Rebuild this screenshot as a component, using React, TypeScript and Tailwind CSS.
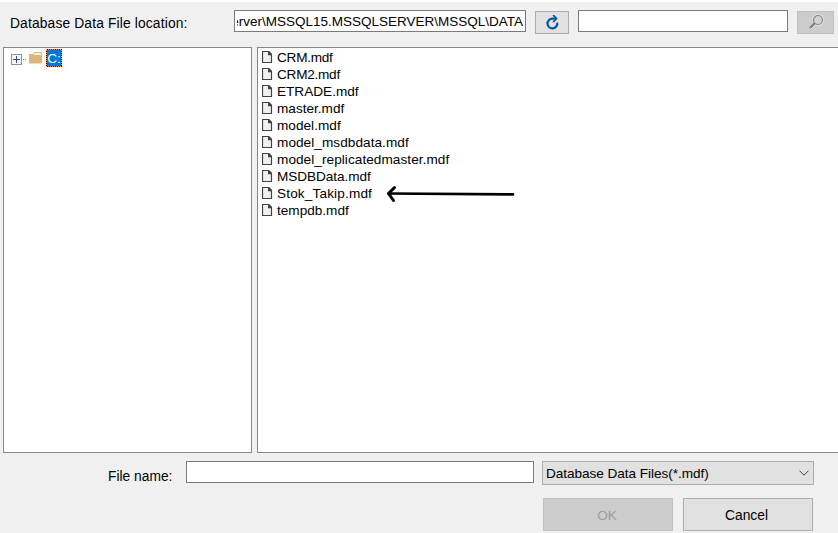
const files = [
  { name: 'CRM.mdf', tracking: 'tracking-[-0.25px]' },
  { name: 'CRM2.mdf', tracking: 'tracking-[-0.25px]' },
  { name: 'ETRADE.mdf', tracking: 'tracking-[0px]' },
  { name: 'master.mdf', tracking: 'tracking-[0px]' },
  { name: 'model.mdf', tracking: 'tracking-[0.03px]' },
  { name: 'model_msdbdata.mdf', tracking: 'tracking-[0.06px]' },
  { name: 'model_replicatedmaster.mdf', tracking: 'tracking-[0.06px]' },
  { name: 'MSDBData.mdf', tracking: 'tracking-[-0.05px]' },
  { name: 'Stok_Takip.mdf', tracking: 'tracking-[0.15px]' },
  { name: 'tempdb.mdf', tracking: 'tracking-[0px]' },
];

function FileIcon() {
  return (
    <svg className="-mt-[2px] block h-3 w-[11px] shrink-0" viewBox="0 0 11 12" fill="none">
      <path d="M.5.5H6.5L9.5 3.5V11.5H.5Z" fill="#f0eff1" stroke="#424242" strokeWidth="1.2" />
      <path d="M6 0H7l3 3v1.2H6Z" fill="#424242" />
    </svg>
  );
}

export default function App() {
  return (
    <div className="flex h-[533px] w-[838px] flex-col overflow-hidden border-t-2 border-white bg-[#f0f0f0] font-['Liberation_Sans',Arial,sans-serif] text-[13.6px] leading-[17px] text-black">
      <div className="flex h-[45px] shrink-0 items-start pt-2">
        <div className="w-[234px] shrink-0 pt-[5px] pl-[10px] text-[13.8px] whitespace-nowrap tracking-[0.15px]">Database Data File location:</div>
        <div className="flex h-[22px] w-[292px] shrink-0 items-center border border-[#7a7a7a] bg-white px-[2px]">
          <div className="flex w-full justify-end overflow-hidden whitespace-nowrap">
            <span className="shrink-0 text-[13.5px]">erver\MSSQL15.MSSQLSERVER\MSSQL\DATA</span>
          </div>
        </div>
        <button aria-label="Refresh" className="mt-px ml-[9px] flex h-[23px] w-[34px] shrink-0 items-center justify-center border border-[#adadad] bg-[#e1e1e1]">
          <svg className="h-[15px] w-[13px]" viewBox="0 0 13 15" fill="none">
            <path d="M8 3.6H6.4A4.9 4.9 0 1 0 11.2 7.6" stroke="#0055a0" strokeWidth="2.2" />
            <path d="M6.3 0H8.3l3.4 3.6-3.4 3.6H6.3l1.9-2.6v-2Z" fill="#0055a0" />
          </svg>
        </button>
        <input aria-label="Search" className="ml-[9px] h-[22px] w-[210px] shrink-0 border border-[#7a7a7a] bg-white outline-none" />
        <button aria-label="Search files" className="mt-px ml-[9px] flex h-[23px] w-[37px] shrink-0 justify-center border border-[#bfbfbf] bg-[#cccccc] pt-[2px]">
          <svg className="h-4 w-4" viewBox="0 0 16 16" fill="none">
            <circle cx="10" cy="6" r="4.8" stroke="#e2e2e2" strokeWidth="2.6" />
            <path d="M2 14 7 9.2" stroke="#dedede" strokeWidth="3.8" />
            <circle cx="10" cy="6" r="4.5" fill="#d2d2d2" stroke="#858585" strokeWidth="1.2" />
            <path d="M1.8 14 6.8 9.2" stroke="#7f7f7f" strokeWidth="2.4" />
          </svg>
        </button>
      </div>

      <div className="flex h-[406px] shrink-0 pl-[3px]">
        <div className="w-[249px] shrink-0 border border-[#828790] bg-white pl-[7px]">
          <div className="flex h-[20px] items-start">
            <svg className="mt-[6px] h-[11px] w-[18px] shrink-0" viewBox="0 0 18 11" shapeRendering="crispEdges">
              <rect x=".5" y=".5" width="10" height="10" fill="#f8f8f8" stroke="#919191" />
              <path d="M2 5.5h7M5.5 2v7" stroke="#36508e" />
              <path d="M12 5.5h1M14 5.5h1" stroke="#808080" />
            </svg>
            <svg className="mt-[4px] h-[12px] w-[13px] shrink-0" viewBox="0 0 13 12">
              <path d="M0 2h4L5 0h8v11.5H0Z" fill="#dcb67a" />
              <path d="M5.3 1.5H12V2.5H4.8" fill="none" stroke="#f7f0e4" />
            </svg>
            <div className="relative mt-px ml-[4px] flex h-[18px] w-[16px] items-center justify-center bg-[#0078d7] text-white">
              C:
              <svg className="absolute inset-0 h-[18px] w-[16px]" viewBox="0 0 16 18" fill="none" shapeRendering="crispEdges">
                <rect x=".5" y=".5" width="15" height="17" stroke="#ff8728" />
                <rect x=".5" y=".5" width="15" height="17" stroke="#000" strokeDasharray="1 1" />
              </svg>
            </div>
          </div>
        </div>
        <div className="relative ml-[5px] w-[590px] shrink-0 border border-[#828790] bg-white pt-px pl-1">
          {files.map((file) => (
            <div key={file.name} className="flex h-[17px] items-center gap-1">
              <FileIcon />
              <span className={`whitespace-nowrap ${file.tracking}`}>{file.name}</span>
            </div>
          ))}
          <svg className="absolute top-[137px] left-[128px] h-[18px] w-[130px]" viewBox="0 0 130 18" fill="none" stroke="#000" strokeLinecap="round" strokeLinejoin="round">
            <path d="M2.5 8.5 127 9.4" strokeWidth="2.7" />
            <path d="M8.5 2.5 2.5 8.5 7.5 15.5" strokeWidth="3" />
          </svg>
        </div>
      </div>

      <div className="flex h-[45px] shrink-0 items-start pt-2">
        <div className="w-[186px] shrink-0 pt-[7px] pl-[108px] text-[13.8px] whitespace-nowrap">File name:</div>
        <input aria-label="File name" className="h-[22px] w-[348px] shrink-0 border border-[#7a7a7a] bg-white outline-none" />
        <div className="ml-2 flex h-[24px] w-[272px] shrink-0 items-center justify-between border border-[#adadad] bg-[#e1e1e1] pr-[4px] pl-[3px]">
          <span className="tracking-[-0.05px]">Database Data Files(*.mdf)</span>
          <svg className="h-[6px] w-[10px]" viewBox="0 0 10 6" fill="none" stroke="#444">
            <path d="M.5.7 5 5.2 9.5.7" />
          </svg>
        </div>
      </div>
      <div className="flex gap-[10px] pl-[543px]">
        <button className="h-[33px] w-[130px] border border-[#bfbfbf] bg-[#cccccc] pt-px pr-[2px] text-[#9d9d9d]">OK</button>
        <button className="h-[33px] w-[130px] border border-[#adadad] bg-[#e1e1e1] pt-[2px] pr-[3px] text-[13.8px]">Cancel</button>
      </div>
    </div>
  );
}
